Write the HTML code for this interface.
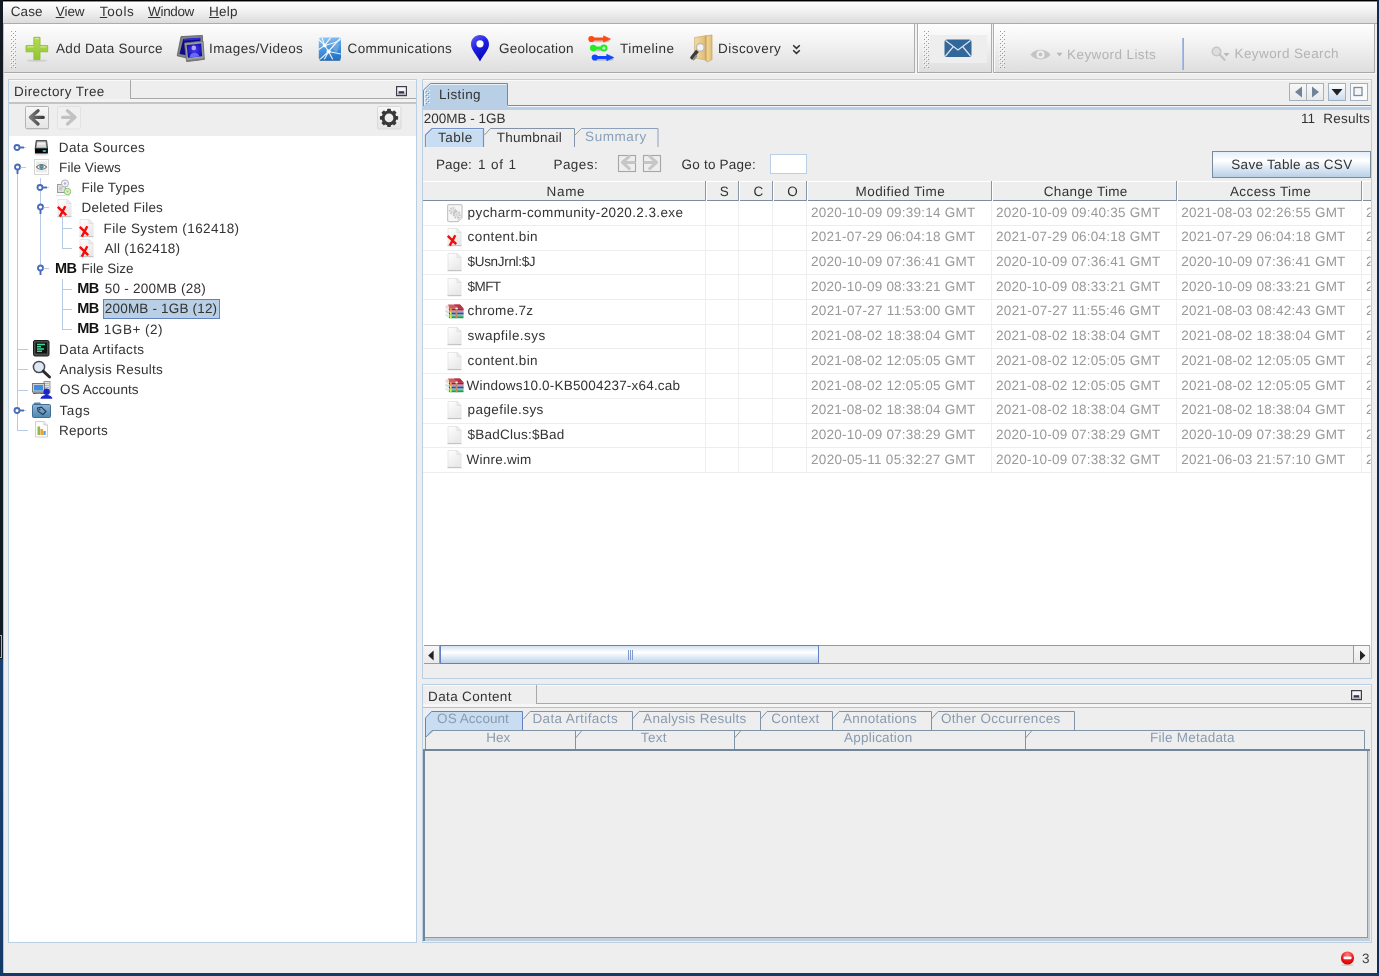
<!DOCTYPE html>
<html><head><meta charset="utf-8"><title>Autopsy</title>
<style>
html,body{margin:0;padding:0}
body{width:1379px;height:976px;overflow:hidden;position:relative;background:#eeeeee;font-family:"Liberation Sans",sans-serif;font-size:13.5px;line-height:16px;color:#333333}
body>div,body>svg,body>span{position:absolute}
svg{overflow:visible;display:block}
.t{white-space:pre;height:16px;position:absolute}
#tx{text-rendering:geometricPrecision;left:0;top:0;width:1379px;height:976px;will-change:transform}
u{text-decoration:underline;text-underline-offset:1px;text-decoration-thickness:1px}
</style></head><body>
<div style="left:0px;top:0px;width:1379px;height:1px;background:#000"></div>
<div style="left:0px;top:1px;width:1379px;height:1px;background:#8e8e8e"></div>
<div style="left:0px;top:0px;width:3px;height:659px;background:#141a24"></div>
<div style="left:0px;top:659px;width:3px;height:317px;background:linear-gradient(#17406f,#143a6a)"></div>
<div style="left:1px;top:635px;width:1px;height:23px;background:#aaa"></div>
<div style="left:0px;top:635px;width:2px;height:1px;background:#aaa"></div>
<div style="left:0px;top:657px;width:2px;height:1px;background:#aaa"></div>
<div style="left:3px;top:2px;width:1px;height:971px;background:rgba(0,0,0,.18)"></div>
<div style="left:1377px;top:0px;width:2px;height:976px;background:#0e2c55"></div>
<div style="left:0px;top:973px;width:1379px;height:3px;background:#143a6a"></div>
<div style="left:3px;top:2px;width:1374px;height:21px;background:linear-gradient(#ffffff,#f6f6f6 30%,#dcdcdc)"></div>
<div style="left:3px;top:23px;width:1374px;height:1px;background:#acacac"></div>
<div style="left:4px;top:24px;width:911px;height:48px;background:linear-gradient(#fefefe,#f4f4f4 35%,#dedede)"></div>
<div style="left:4px;top:72px;width:911px;height:1px;background:#a9a9a9"></div>
<div style="left:914px;top:23px;width:1px;height:50px;background:#adadad"></div>
<div style="left:917px;top:24px;width:75px;height:48px;background:linear-gradient(#fefefe,#f4f4f4 35%,#dedede)"></div>
<div style="left:917px;top:72px;width:75px;height:1px;background:#a9a9a9"></div>
<div style="left:917px;top:23px;width:1px;height:50px;background:#adadad"></div>
<div style="left:918px;top:24px;width:1px;height:48px;background:rgba(255,255,255,.8)"></div>
<div style="left:991px;top:23px;width:1px;height:50px;background:#adadad"></div>
<div style="left:993px;top:24px;width:382px;height:48px;background:linear-gradient(#fefefe,#f4f4f4 35%,#dedede)"></div>
<div style="left:993px;top:72px;width:382px;height:1px;background:#a9a9a9"></div>
<div style="left:993px;top:23px;width:1px;height:50px;background:#adadad"></div>
<div style="left:994px;top:24px;width:1px;height:48px;background:rgba(255,255,255,.8)"></div>
<div style="left:1374px;top:23px;width:1px;height:50px;background:#adadad"></div>
<div style="left:915px;top:24px;width:2px;height:49px;background:#f2f2f2"></div>
<div style="left:992px;top:24px;width:1px;height:49px;background:#f2f2f2"></div>
<div style="left:1375px;top:24px;width:2px;height:49px;background:#eee"></div>
<div style="left:4px;top:73px;width:1373px;height:1px;background:#f8f8f8"></div>
<svg style="left:10px;top:30px" width="6" height="38"><defs><pattern id="g1" width="4" height="4" patternUnits="userSpaceOnUse"><rect x="0" y="0" width="1" height="1" fill="#fff"/><rect x="1" y="1" width="1" height="1" fill="#9a9a9a"/><rect x="2" y="2" width="1" height="1" fill="#fff"/><rect x="3" y="3" width="1" height="1" fill="#9a9a9a"/></pattern></defs><rect width="6" height="38" fill="url(#g1)"/></svg>
<svg style="left:923px;top:30px" width="6" height="38"><defs><pattern id="g2" width="4" height="4" patternUnits="userSpaceOnUse"><rect x="0" y="0" width="1" height="1" fill="#fff"/><rect x="1" y="1" width="1" height="1" fill="#9a9a9a"/><rect x="2" y="2" width="1" height="1" fill="#fff"/><rect x="3" y="3" width="1" height="1" fill="#9a9a9a"/></pattern></defs><rect width="6" height="38" fill="url(#g2)"/></svg>
<svg style="left:999px;top:30px" width="6" height="38"><defs><pattern id="g3" width="4" height="4" patternUnits="userSpaceOnUse"><rect x="0" y="0" width="1" height="1" fill="#fff"/><rect x="1" y="1" width="1" height="1" fill="#9a9a9a"/><rect x="2" y="2" width="1" height="1" fill="#fff"/><rect x="3" y="3" width="1" height="1" fill="#9a9a9a"/></pattern></defs><rect width="6" height="38" fill="url(#g3)"/></svg>
<div style="left:930px;top:35px;width:57px;height:28px;background:#eeeeee"></div>
<div style="left:1182px;top:38px;width:2px;height:32px;background:linear-gradient(90deg,#b4c6e6,#8aa4d6)"></div>
<div style="left:8px;top:79px;width:409px;height:864px;background:#eeeeee;border:1px solid #b8cfe5;box-sizing:border-box"></div>
<div style="left:9px;top:80px;width:407px;height:1px;background:#fafafa"></div>
<div style="left:130px;top:80px;width:1px;height:19px;background:#a8a8a8"></div>
<div style="left:130px;top:98px;width:286px;height:1px;background:#a8a8a8"></div>
<div style="left:9px;top:99px;width:407px;height:3px;background:#f3f3f3"></div>
<div style="left:9px;top:102px;width:407px;height:2px;background:#c4c4c4"></div>
<div style="left:9px;top:136px;width:407px;height:806px;background:#fff"></div>
<div style="left:422px;top:79px;width:950px;height:600px;background:#eeeeee;border:1px solid #b8cfe5;box-sizing:border-box"></div>
<div style="left:423px;top:80px;width:948px;height:1px;background:#fafafa"></div>
<div style="left:508px;top:105px;width:863px;height:1px;background:#7a8a99"></div>
<div style="left:508px;top:106px;width:863px;height:1px;background:#f2f5f9"></div>
<div style="left:423px;top:107px;width:948px;height:3px;background:#b8cfe5"></div>
<svg style="left:422px;top:82px" width="88" height="28"><path d="M1.5,25 L1.5,8 L8.3,1.5 L85.5,1.5 L85.5,25 Z" fill="#b8cfe5"/><path d="M1.5,24 L1.5,8 L8.3,1.5 L85.5,1.5 L85.5,23.5" fill="none" stroke="#7a8a99" stroke-width="1"/><path d="M2.5,23 L2.5,8.6 L8.8,2.5 L84.5,2.5" fill="none" stroke="#e9f0f8" stroke-width="1"/><rect x="1" y="24" width="85" height="4" fill="#b8cfe5"/></svg>
<svg style="left:425px;top:90px" width="6" height="15"><defs><pattern id="g4" width="4" height="4" patternUnits="userSpaceOnUse"><rect x="0" y="0" width="1" height="1" fill="#fff"/><rect x="1" y="1" width="1" height="1" fill="#7d93ad"/><rect x="2" y="2" width="1" height="1" fill="#fff"/><rect x="3" y="3" width="1" height="1" fill="#7d93ad"/></pattern></defs><rect width="5" height="14" fill="url(#g4)"/></svg>
<div style="left:422px;top:684px;width:950px;height:259px;background:#eeeeee;border:1px solid #b8cfe5;box-sizing:border-box"></div>
<div style="left:423px;top:685px;width:948px;height:1px;background:#fafafa"></div>
<div style="left:536px;top:685px;width:1px;height:19px;background:#a8a8a8"></div>
<div style="left:536px;top:703px;width:835px;height:1px;background:#a8a8a8"></div>
<div style="left:423px;top:704px;width:948px;height:3px;background:#f6f6f6"></div>
<div style="left:423px;top:707px;width:948px;height:1px;background:#bdbdbd"></div>
<svg style="left:396px;top:86px" width="11" height="10"><rect x="0.6" y="0.6" width="9.8" height="9" fill="#f6f6f6" stroke="#3c3c4a" stroke-width="1.2"/><rect x="1.4" y="7" width="8.2" height="2" fill="#b8b8c0"/><rect x="2.6" y="5.2" width="5.6" height="2.2" fill="#33334a"/></svg>
<svg style="left:25px;top:106px" width="25" height="24"><defs><linearGradient id="bg1" x1="0" y1="0" x2="0" y2="1"><stop offset="0" stop-color="#f8f8f8"/><stop offset="1" stop-color="#e4e4e4"/></linearGradient><linearGradient id="ar1" x1="0" y1="0" x2="1" y2="0"><stop offset="0" stop-color="#7a7a7a"/><stop offset="1" stop-color="#3c3c3c"/></linearGradient></defs><rect x="1" y="1" width="23" height="22.5" rx="1" fill="#c9c9c9"/><rect x="0.5" y="0.5" width="23" height="22" rx="1" fill="url(#bg1)" stroke="#b4b4b4"/><path d="M13,4.7 L5.4,11.3 L13,17.9 M6.5,11.3 L18.3,11.3" stroke="url(#ar1)" stroke-width="3.3" fill="none" stroke-linecap="round" stroke-linejoin="round"/></svg>
<svg style="left:57px;top:106px" width="25" height="24"><rect x="0.5" y="0.5" width="23" height="22.5" rx="1.5" fill="#f0f0f0" stroke="#e2e2e2"/><path d="M10.5,4.7 L18,11.3 L10.5,17.9 M17,11.3 L5.6,11.3" stroke="#c2c2c2" stroke-width="3.3" fill="none" stroke-linecap="round" stroke-linejoin="round"/></svg>
<svg style="left:377px;top:106px" width="25" height="24"><rect x="0.5" y="0.5" width="23.5" height="22.5" rx="1.5" fill="url(#bg1)" stroke="#d9d9d9"/><g transform="translate(12,11.9)"><g fill="#383838"><rect x="-1.9" y="-9.1" width="3.8" height="4" rx="0.8" transform="rotate(0)"/><rect x="-1.9" y="-9.1" width="3.8" height="4" rx="0.8" transform="rotate(45)"/><rect x="-1.9" y="-9.1" width="3.8" height="4" rx="0.8" transform="rotate(90)"/><rect x="-1.9" y="-9.1" width="3.8" height="4" rx="0.8" transform="rotate(135)"/><rect x="-1.9" y="-9.1" width="3.8" height="4" rx="0.8" transform="rotate(180)"/><rect x="-1.9" y="-9.1" width="3.8" height="4" rx="0.8" transform="rotate(225)"/><rect x="-1.9" y="-9.1" width="3.8" height="4" rx="0.8" transform="rotate(270)"/><rect x="-1.9" y="-9.1" width="3.8" height="4" rx="0.8" transform="rotate(315)"/></g><circle r="5.9" fill="none" stroke="#383838" stroke-width="3"/></g></svg>
<div style="left:17px;top:168px;width:1px;height:263px;background:#b7cae5"></div>
<div style="left:40px;top:178px;width:1px;height:91px;background:#b7cae5"></div>
<div style="left:62px;top:216px;width:1px;height:33px;background:#b7cae5"></div>
<div style="left:62px;top:279px;width:1px;height:51px;background:#b7cae5"></div>
<div style="left:62px;top:228px;width:10px;height:1px;background:#b7cae5"></div>
<div style="left:62px;top:248px;width:10px;height:1px;background:#b7cae5"></div>
<div style="left:62px;top:289px;width:10px;height:1px;background:#b7cae5"></div>
<div style="left:62px;top:309px;width:10px;height:1px;background:#b7cae5"></div>
<div style="left:62px;top:329px;width:10px;height:1px;background:#b7cae5"></div>
<div style="left:17px;top:349px;width:11px;height:1px;background:#b7cae5"></div>
<div style="left:17px;top:369px;width:11px;height:1px;background:#b7cae5"></div>
<div style="left:17px;top:390px;width:11px;height:1px;background:#b7cae5"></div>
<div style="left:17px;top:430px;width:11px;height:1px;background:#b7cae5"></div>
<svg style="left:13px;top:143px" width="14" height="9"><circle cx="4" cy="4.5" r="2.5" fill="#fff" stroke="#4a6cb8" stroke-width="1.9"/><path d="M6.8,4.5 L11,4.5" stroke="#4a6cb8" stroke-width="1.9"/><path d="M11,4.5 L13,4.5" stroke="#b7cae5" stroke-width="1"/></svg>
<svg style="left:13px;top:163px" width="14" height="13"><circle cx="4.5" cy="4" r="2.5" fill="#fff" stroke="#4a6cb8" stroke-width="1.9"/><path d="M4.5,6.8 L4.5,11" stroke="#4a6cb8" stroke-width="1.9"/><path d="M7.5,4.5 L13,4.5" stroke="#b7cae5" stroke-width="1"/></svg>
<svg style="left:36px;top:183px" width="14" height="9"><circle cx="4" cy="4.5" r="2.5" fill="#fff" stroke="#4a6cb8" stroke-width="1.9"/><path d="M6.8,4.5 L11,4.5" stroke="#4a6cb8" stroke-width="1.9"/><path d="M11,4.5 L13,4.5" stroke="#b7cae5" stroke-width="1"/></svg>
<svg style="left:36px;top:203px" width="14" height="13"><circle cx="4.5" cy="4" r="2.5" fill="#fff" stroke="#4a6cb8" stroke-width="1.9"/><path d="M4.5,6.8 L4.5,11" stroke="#4a6cb8" stroke-width="1.9"/><path d="M7.5,4.5 L13,4.5" stroke="#b7cae5" stroke-width="1"/></svg>
<svg style="left:36px;top:264px" width="14" height="13"><circle cx="4.5" cy="4" r="2.5" fill="#fff" stroke="#4a6cb8" stroke-width="1.9"/><path d="M4.5,6.8 L4.5,11" stroke="#4a6cb8" stroke-width="1.9"/><path d="M7.5,4.5 L13,4.5" stroke="#b7cae5" stroke-width="1"/></svg>
<svg style="left:13px;top:406px" width="14" height="9"><circle cx="4" cy="4.5" r="2.5" fill="#fff" stroke="#4a6cb8" stroke-width="1.9"/><path d="M6.8,4.5 L11,4.5" stroke="#4a6cb8" stroke-width="1.9"/><path d="M11,4.5 L13,4.5" stroke="#b7cae5" stroke-width="1"/></svg>
<div style="left:103px;top:299px;width:117px;height:20px;background:#b8cfe5;border:1px solid #6382bf;box-sizing:border-box"></div>
<svg style="left:1289px;top:83px" width="80" height="19">
<defs><linearGradient id="nb" x1="0" y1="0" x2="0" y2="1"><stop offset="0" stop-color="#f8f8f8"/><stop offset="1" stop-color="#e9e9e9"/></linearGradient>
<linearGradient id="nb2" x1="0" y1="0" x2="0" y2="1"><stop offset="0" stop-color="#ffffff"/><stop offset="1" stop-color="#c9dcf0"/></linearGradient></defs>
<rect x="0.5" y="0.5" width="17" height="17" fill="url(#nb)" stroke="#a3b0be"/>
<rect x="17.5" y="0.5" width="17" height="17" fill="url(#nb)" stroke="#a3b0be"/>
<path d="M13,3.5 L13,14.5 L6,9 Z" fill="#6f8399"/><path d="M23,3.5 L23,14.5 L30,9 Z" fill="#6f8399"/>
<rect x="39.5" y="0.5" width="17" height="17" fill="url(#nb2)" stroke="#a3b0be"/>
<path d="M42.5,6 L53.5,6 L48,12.5 Z" fill="#222"/>
<rect x="61.5" y="0.5" width="17" height="17" fill="#fafafa" stroke="#a3b0be"/>
<rect x="65" y="4.5" width="8" height="8" fill="#f6f6f6" stroke="#7d8ea3" stroke-width="1.3"/>
</svg>
<svg style="left:424px;top:128px" width="236" height="21">
<path d="M1.5,19 L1.5,7 L8,0.5 L59.5,0.5 L59.5,19 Z" fill="#c8ddf2"/>
<path d="M2.6,19 L2.6,7.5 L8.5,1.6 L58.5,1.6" fill="none" stroke="#dceaf8" stroke-width="1"/>
<path d="M1.5,19 L1.5,7 L8,0.5 L59.5,0.5 L59.5,19" fill="none" stroke="#7391cb" stroke-width="1.2"/>
<path d="M60.5,7 L66.5,0.5 L150.5,0.5 L150.5,19" fill="none" stroke="#8494a6"/>
<path d="M151,7 L157.5,0.5 L234,0.5 L234,19" fill="none" stroke="#8da2ba"/>
</svg>
<svg style="left:618px;top:155px" width="44" height="18">
<rect x="0.5" y="0.5" width="17" height="16" fill="#eeeeee" stroke="#a6a6a6" stroke-width="1.1"/>
<rect x="25.5" y="0.5" width="17" height="16" fill="#eeeeee" stroke="#a6a6a6" stroke-width="1.1"/>
<path d="M11.3,1.4 L4.4,7.4 L11.3,13.6 M5.4,7.4 L16.4,7.4" stroke="#c6c6c6" stroke-width="3" fill="none" stroke-linecap="round" stroke-linejoin="round"/>
<path d="M31.7,1.4 L38.6,7.4 L31.7,13.6 M37.6,7.4 L26.8,7.4" stroke="#c6c6c6" stroke-width="3" fill="none" stroke-linecap="round" stroke-linejoin="round"/>
</svg>
<div style="left:770px;top:154px;width:37px;height:20px;background:#fff;border:1px solid #b8cfe5;box-sizing:border-box"></div>
<div style="left:1212px;top:151px;width:159px;height:27px;background:linear-gradient(#e4eef9,#ffffff 35%,#d7e5f3 70%,#b9d0e6);border:1px solid #7a8a99;box-sizing:border-box"></div>
<div style="left:423px;top:181px;width:948px;height:465px;background:#fff"></div>
<div style="left:423px;top:181px;width:948px;height:19px;background:#eeeeee"></div>
<div style="left:423px;top:181px;width:948px;height:1px;background:#ffffff"></div>
<div style="left:423px;top:200px;width:948px;height:1px;background:#7d8d9d"></div>
<div style="left:705px;top:181px;width:1px;height:20px;background:#8797a8"></div>
<div style="left:706px;top:181px;width:1px;height:20px;background:#ffffff"></div>
<div style="left:705px;top:201px;width:1px;height:271px;background:#efefef"></div>
<div style="left:738px;top:181px;width:1px;height:20px;background:#8797a8"></div>
<div style="left:739px;top:181px;width:1px;height:20px;background:#ffffff"></div>
<div style="left:738px;top:201px;width:1px;height:271px;background:#efefef"></div>
<div style="left:772px;top:181px;width:1px;height:20px;background:#8797a8"></div>
<div style="left:773px;top:181px;width:1px;height:20px;background:#ffffff"></div>
<div style="left:772px;top:201px;width:1px;height:271px;background:#efefef"></div>
<div style="left:806px;top:181px;width:1px;height:20px;background:#8797a8"></div>
<div style="left:807px;top:181px;width:1px;height:20px;background:#ffffff"></div>
<div style="left:806px;top:201px;width:1px;height:271px;background:#efefef"></div>
<div style="left:991px;top:181px;width:1px;height:20px;background:#8797a8"></div>
<div style="left:992px;top:181px;width:1px;height:20px;background:#ffffff"></div>
<div style="left:991px;top:201px;width:1px;height:271px;background:#efefef"></div>
<div style="left:1176px;top:181px;width:1px;height:20px;background:#8797a8"></div>
<div style="left:1177px;top:181px;width:1px;height:20px;background:#ffffff"></div>
<div style="left:1176px;top:201px;width:1px;height:271px;background:#efefef"></div>
<div style="left:1361px;top:181px;width:1px;height:20px;background:#8797a8"></div>
<div style="left:1362px;top:181px;width:1px;height:20px;background:#ffffff"></div>
<div style="left:1361px;top:201px;width:1px;height:271px;background:#efefef"></div>
<div style="left:423px;top:225px;width:948px;height:1px;background:#ededed"></div>
<div style="left:423px;top:250px;width:948px;height:1px;background:#ededed"></div>
<div style="left:423px;top:274px;width:948px;height:1px;background:#ededed"></div>
<div style="left:423px;top:299px;width:948px;height:1px;background:#ededed"></div>
<div style="left:423px;top:324px;width:948px;height:1px;background:#ededed"></div>
<div style="left:423px;top:348px;width:948px;height:1px;background:#ededed"></div>
<div style="left:423px;top:373px;width:948px;height:1px;background:#ededed"></div>
<div style="left:423px;top:398px;width:948px;height:1px;background:#ededed"></div>
<div style="left:423px;top:423px;width:948px;height:1px;background:#ededed"></div>
<div style="left:423px;top:447px;width:948px;height:1px;background:#ededed"></div>
<div style="left:423px;top:472px;width:948px;height:1px;background:#ededed"></div>
<svg style="left:447px;top:204px" width="16" height="19"><path d="M2,0.6 L13.6,0.6 Q15,0.6 15,2 L15,13.5 L11,17.6 L2,17.6 Q0.6,17.6 0.6,16.2 L0.6,2 Q0.6,0.6 2,0.6 Z" fill="#f6f6f6" stroke="#c6c6c6" stroke-width="1.2"/><path d="M15,13.5 L11.5,13.8 L11,17.6" fill="#e4e4e4" stroke="#cfcfcf" stroke-width=".8"/><circle cx="5.6" cy="6.8" r="2.7" fill="none" stroke="#c6c8ca" stroke-width="2.2" stroke-dasharray="1.6 0.9"/><circle cx="5.6" cy="6.8" r="1.5" fill="#dadcde"/><circle cx="9.8" cy="10.6" r="2.9" fill="none" stroke="#c2c4c6" stroke-width="2.2" stroke-dasharray="1.6 0.9"/><circle cx="9.8" cy="10.6" r="1.6" fill="#d6d8da"/></svg>
<svg style="left:447px;top:228px" width="15" height="19"><defs><linearGradient id="fg447228" x1="0" y1="0" x2="0.6" y2="1"><stop offset="0" stop-color="#ffffff"/><stop offset="1" stop-color="#e9e9e9"/></linearGradient></defs><path d="M1,0.5 L10,0.5 L14,4.5 L14,17 L1,17 Z" fill="url(#fg447228)" stroke="#e6e6e6"/><path d="M10,0.5 L10,4.5 L14,4.5 Z" fill="#f2f2f2" stroke="#e0e0e0"/><path d="M0.5,17.6 L14.5,17.6" stroke="#c4c4c4" stroke-width="1.2"/><path d="M0.8,7.8 L9.2,16.2 M8.3,7.2 L2.8,17.6" stroke="#f60a0a" stroke-width="2.4" fill="none"/></svg>
<svg style="left:447px;top:253px" width="15" height="19"><defs><linearGradient id="fg447253" x1="0" y1="0" x2="0.6" y2="1"><stop offset="0" stop-color="#ffffff"/><stop offset="1" stop-color="#e9e9e9"/></linearGradient></defs><path d="M1,0.5 L10,0.5 L14,4.5 L14,17 L1,17 Z" fill="url(#fg447253)" stroke="#e6e6e6"/><path d="M10,0.5 L10,4.5 L14,4.5 Z" fill="#f2f2f2" stroke="#e0e0e0"/><path d="M0.5,17.6 L14.5,17.6" stroke="#c4c4c4" stroke-width="1.2"/></svg>
<svg style="left:447px;top:278px" width="15" height="19"><defs><linearGradient id="fg447278" x1="0" y1="0" x2="0.6" y2="1"><stop offset="0" stop-color="#ffffff"/><stop offset="1" stop-color="#e9e9e9"/></linearGradient></defs><path d="M1,0.5 L10,0.5 L14,4.5 L14,17 L1,17 Z" fill="url(#fg447278)" stroke="#e6e6e6"/><path d="M10,0.5 L10,4.5 L14,4.5 Z" fill="#f2f2f2" stroke="#e0e0e0"/><path d="M0.5,17.6 L14.5,17.6" stroke="#c4c4c4" stroke-width="1.2"/></svg>
<svg style="left:445px;top:304px" width="19" height="15"><path d="M3,0.4 L15,0.4 L18.6,4.5 L4,4.5 Z" fill="#cf5a68"/><path d="M9,0.4 L15,0.4 L18.6,4.5 L12,4.5 Z" fill="#b63346"/><rect x="4" y="4.5" width="14.6" height="2.1" fill="#a51c30"/><path d="M0.4,2 L3,0.4 L4,4.5 L4,6.6 L0.4,4 Z" fill="#efd8dc"/><rect x="4" y="6.9" width="14.6" height="1.6" fill="#93a8da"/><rect x="4" y="8.5" width="14.6" height="2.1" fill="#2c4c9c"/><path d="M0.4,5.4 L4,6.9 L4,10.6 L0.4,8 Z" fill="#d6deee"/><rect x="4" y="10.8" width="14.6" height="1.5" fill="#78cc94"/><rect x="4" y="12.3" width="14.6" height="1.9" rx=".6" fill="#18a050"/><path d="M0.4,9.4 L4,10.9 L4,14.2 L0.4,11.6 Z" fill="#d6eeda"/><rect x="5" y="4.2" width="1.6" height="2.4" fill="#f2b020"/><rect x="5" y="7.6" width="1.6" height="3" fill="#f0e040"/><rect x="5" y="11.2" width="1.6" height="3" fill="#e6ea44"/><rect x="10.6" y="2.6" width="1.9" height="11.6" fill="#c48a64"/><rect x="10.4" y="3.8" width="2.3" height="1.3" fill="#f4ece6"/></svg>
<svg style="left:447px;top:327px" width="15" height="19"><defs><linearGradient id="fg447327" x1="0" y1="0" x2="0.6" y2="1"><stop offset="0" stop-color="#ffffff"/><stop offset="1" stop-color="#e9e9e9"/></linearGradient></defs><path d="M1,0.5 L10,0.5 L14,4.5 L14,17 L1,17 Z" fill="url(#fg447327)" stroke="#e6e6e6"/><path d="M10,0.5 L10,4.5 L14,4.5 Z" fill="#f2f2f2" stroke="#e0e0e0"/><path d="M0.5,17.6 L14.5,17.6" stroke="#c4c4c4" stroke-width="1.2"/></svg>
<svg style="left:447px;top:352px" width="15" height="19"><defs><linearGradient id="fg447352" x1="0" y1="0" x2="0.6" y2="1"><stop offset="0" stop-color="#ffffff"/><stop offset="1" stop-color="#e9e9e9"/></linearGradient></defs><path d="M1,0.5 L10,0.5 L14,4.5 L14,17 L1,17 Z" fill="url(#fg447352)" stroke="#e6e6e6"/><path d="M10,0.5 L10,4.5 L14,4.5 Z" fill="#f2f2f2" stroke="#e0e0e0"/><path d="M0.5,17.6 L14.5,17.6" stroke="#c4c4c4" stroke-width="1.2"/></svg>
<svg style="left:445px;top:378px" width="19" height="15"><path d="M3,0.4 L15,0.4 L18.6,4.5 L4,4.5 Z" fill="#cf5a68"/><path d="M9,0.4 L15,0.4 L18.6,4.5 L12,4.5 Z" fill="#b63346"/><rect x="4" y="4.5" width="14.6" height="2.1" fill="#a51c30"/><path d="M0.4,2 L3,0.4 L4,4.5 L4,6.6 L0.4,4 Z" fill="#efd8dc"/><rect x="4" y="6.9" width="14.6" height="1.6" fill="#93a8da"/><rect x="4" y="8.5" width="14.6" height="2.1" fill="#2c4c9c"/><path d="M0.4,5.4 L4,6.9 L4,10.6 L0.4,8 Z" fill="#d6deee"/><rect x="4" y="10.8" width="14.6" height="1.5" fill="#78cc94"/><rect x="4" y="12.3" width="14.6" height="1.9" rx=".6" fill="#18a050"/><path d="M0.4,9.4 L4,10.9 L4,14.2 L0.4,11.6 Z" fill="#d6eeda"/><rect x="5" y="4.2" width="1.6" height="2.4" fill="#f2b020"/><rect x="5" y="7.6" width="1.6" height="3" fill="#f0e040"/><rect x="5" y="11.2" width="1.6" height="3" fill="#e6ea44"/><rect x="10.6" y="2.6" width="1.9" height="11.6" fill="#c48a64"/><rect x="10.4" y="3.8" width="2.3" height="1.3" fill="#f4ece6"/></svg>
<svg style="left:447px;top:401px" width="15" height="19"><defs><linearGradient id="fg447401" x1="0" y1="0" x2="0.6" y2="1"><stop offset="0" stop-color="#ffffff"/><stop offset="1" stop-color="#e9e9e9"/></linearGradient></defs><path d="M1,0.5 L10,0.5 L14,4.5 L14,17 L1,17 Z" fill="url(#fg447401)" stroke="#e6e6e6"/><path d="M10,0.5 L10,4.5 L14,4.5 Z" fill="#f2f2f2" stroke="#e0e0e0"/><path d="M0.5,17.6 L14.5,17.6" stroke="#c4c4c4" stroke-width="1.2"/></svg>
<svg style="left:447px;top:426px" width="15" height="19"><defs><linearGradient id="fg447426" x1="0" y1="0" x2="0.6" y2="1"><stop offset="0" stop-color="#ffffff"/><stop offset="1" stop-color="#e9e9e9"/></linearGradient></defs><path d="M1,0.5 L10,0.5 L14,4.5 L14,17 L1,17 Z" fill="url(#fg447426)" stroke="#e6e6e6"/><path d="M10,0.5 L10,4.5 L14,4.5 Z" fill="#f2f2f2" stroke="#e0e0e0"/><path d="M0.5,17.6 L14.5,17.6" stroke="#c4c4c4" stroke-width="1.2"/></svg>
<svg style="left:447px;top:450px" width="15" height="19"><defs><linearGradient id="fg447450" x1="0" y1="0" x2="0.6" y2="1"><stop offset="0" stop-color="#ffffff"/><stop offset="1" stop-color="#e9e9e9"/></linearGradient></defs><path d="M1,0.5 L10,0.5 L14,4.5 L14,17 L1,17 Z" fill="url(#fg447450)" stroke="#e6e6e6"/><path d="M10,0.5 L10,4.5 L14,4.5 Z" fill="#f2f2f2" stroke="#e0e0e0"/><path d="M0.5,17.6 L14.5,17.6" stroke="#c4c4c4" stroke-width="1.2"/></svg>
<div style="left:424px;top:645px;width:946px;height:1px;background:#8e9cab"></div>
<div style="left:424px;top:646px;width:946px;height:17px;background:#eeeeee"></div>
<div style="left:424px;top:663px;width:946px;height:1px;background:#8e9cab"></div>
<div style="left:424px;top:646px;width:16px;height:17px;background:linear-gradient(#f7f7f7,#eaeaea);border-right:1px solid #8e9cab;box-sizing:border-box"></div>
<svg style="left:428px;top:650px" width="8" height="12"><path d="M5.6,0.5 L5.6,10.5 L0.2,5.5 Z" fill="#222"/></svg>
<div style="left:1353px;top:646px;width:17px;height:17px;background:linear-gradient(#f7f7f7,#eaeaea);border-left:1px solid #8e9cab;border-right:1px solid #a9b4c0;box-sizing:border-box"></div>
<svg style="left:1359px;top:650px" width="8" height="12"><path d="M1,0.5 L1,10.5 L6.4,5.5 Z" fill="#222"/></svg>
<div style="left:440px;top:645px;width:379px;height:19px;background:linear-gradient(#d3e2f3,#ffffff 38%,#dbe7f4 70%,#bdd2e8);border:1px solid #6382bf;box-sizing:border-box"></div>
<div style="left:628px;top:650px;width:1px;height:10px;background:#7f9bd0"></div>
<div style="left:630px;top:650px;width:1px;height:10px;background:#7f9bd0"></div>
<div style="left:632px;top:650px;width:1px;height:10px;background:#7f9bd0"></div>
<svg style="left:1351px;top:690px" width="11" height="10"><rect x="0.6" y="0.6" width="9.8" height="9" fill="#f6f6f6" stroke="#3c3c4a" stroke-width="1.2"/><rect x="1.4" y="7" width="8.2" height="2" fill="#b8b8c0"/><rect x="2.6" y="5.2" width="5.6" height="2.2" fill="#33334a"/></svg>
<svg style="left:0px;top:711px" width="1379" height="42"><path d="M425.5,26 L425.5,7 L431.5,0.5 L522.5,0.5 L522.5,19.5 L433,19.5 L426,26 Z" fill="#c8ddf2" stroke="#6382bf"/><path d="M523.5,8 L530,0.5 L632.5,0.5 L632.5,19.5 L523.5,19.5" fill="none" stroke="#8193a7"/><path d="M632.5,8 L639,0.5 L760.5,0.5 L760.5,19.5 L632.5,19.5" fill="none" stroke="#8193a7"/><path d="M760.5,8 L767,0.5 L832.5,0.5 L832.5,19.5 L760.5,19.5" fill="none" stroke="#8193a7"/><path d="M832.5,8 L839,0.5 L931.5,0.5 L931.5,19.5 L832.5,19.5" fill="none" stroke="#8193a7"/><path d="M931.5,8 L938,0.5 L1074.5,0.5 L1074.5,19.5 L931.5,19.5" fill="none" stroke="#8193a7"/><path d="M425.5,38 L425.5,26.5 L432,19.5 L575.5,19.5 L575.5,38" fill="none" stroke="#8193a7"/><path d="M575.5,27 L582,19.5 L734.5,19.5 L734.5,38" fill="none" stroke="#8193a7"/><path d="M734.5,27 L741,19.5 L1025.5,19.5 L1025.5,38" fill="none" stroke="#8193a7"/><path d="M1025.5,27 L1032,19.5 L1364.5,19.5 L1364.5,38" fill="none" stroke="#8193a7"/></svg>
<div style="left:423px;top:749px;width:947px;height:2px;background:#72869b"></div>
<div style="left:423px;top:749px;width:2px;height:192px;background:#72869b"></div>
<div style="left:1367px;top:751px;width:1px;height:187px;background:#8c9aa8"></div>
<div style="left:1368px;top:751px;width:2px;height:190px;background:#c6ced8"></div>
<div style="left:425px;top:937px;width:943px;height:1px;background:#8c9aa8"></div>
<div style="left:425px;top:938px;width:945px;height:3px;background:#c6ced8"></div>
<svg style="left:1340px;top:951px" width="15" height="15"><defs><radialGradient id="rd" cx="0.5" cy="0.25" r="0.8"><stop offset="0" stop-color="#ff8a8a"/><stop offset="0.55" stop-color="#f01818"/><stop offset="1" stop-color="#c80000"/></radialGradient></defs><ellipse cx="7.5" cy="14" rx="6" ry="1" fill="rgba(0,0,0,.12)"/><circle cx="7.5" cy="7" r="6.6" fill="url(#rd)"/><rect x="3.5" y="5.6" width="8" height="2.6" rx="0.8" fill="#fff"/></svg>
<svg style="left:25px;top:36px" width="24" height="27"><defs><linearGradient id="gp" x1="0" y1="0" x2="0" y2="1"><stop offset="0" stop-color="#b4da58"/><stop offset="1" stop-color="#93c531"/></linearGradient></defs>
<ellipse cx="12" cy="24.6" rx="10.5" ry="1.1" fill="rgba(0,0,0,.10)"/>
<path d="M8.9,1.3 L15,1.3 L15,9.6 L22.7,9.6 L22.7,15.8 L15,15.8 L15,23.6 L8.9,23.6 L8.9,15.8 L1,15.8 L1,9.6 L8.9,9.6 Z" fill="url(#gp)" stroke="#90c030" stroke-width=".9" stroke-linejoin="round"/>
<path d="M9.9,2.6 L14,2.6 M2.3,10.9 L8.6,10.9 M15.3,10.9 L21.4,10.9" stroke="#cfe98c" stroke-width="1.1"/></svg>
<svg style="left:176px;top:35px" width="30" height="28"><defs><linearGradient id="ph" x1="0" y1="0" x2="0" y2="1"><stop offset="0" stop-color="#2626e0"/><stop offset="1" stop-color="#0a0a96"/></linearGradient><radialGradient id="ph2" cx="0.5" cy="0.45" r="0.6"><stop offset="0" stop-color="#4a3af0"/><stop offset="1" stop-color="#0c0ca8"/></radialGradient></defs>
<path d="M5,1.6 L26.4,0.4 L27,17 L10,22.8 L1.2,20.8 Z" fill="#848484" stroke="#5a5a5a" stroke-width=".8"/>
<path d="M7.2,4 L24.4,2.8 L24.6,15 L9,20 L3.6,19 Z" fill="#0c0c84"/>
<path d="M7.6,4.8 L24.2,3.6" stroke="#2a2af0" stroke-width="1.8"/>
<path d="M8.5,8 L27,6 L28.4,24.4 L10.6,26.6 Z" fill="#9c9c9c" stroke="#666" stroke-width=".8"/>
<path d="M10.6,10 L25.2,8.4 L26.2,21.2 L12,22.8 Z" fill="url(#ph2)"/>
<circle cx="17.8" cy="12.9" r="2.3" fill="#b0a4ff"/><path d="M13.6,22.6 C13.4,16.6 22.6,15.8 23.4,21.6 Z" fill="#6a6af0"/>
<path d="M11,25.9 L28,23.8" stroke="#777" stroke-width="1.2"/></svg>
<svg style="left:318px;top:37px" width="24" height="25"><defs><linearGradient id="cm" x1="0" y1="0" x2="0.25" y2="1"><stop offset="0" stop-color="#9ccdf4"/><stop offset="0.5" stop-color="#4f9be0"/><stop offset="1" stop-color="#2a76c6"/></linearGradient></defs>
<rect x="0.8" y="0.6" width="22.2" height="22.4" rx="2.2" fill="url(#cm)"/>
<path d="M13,6 C16,4 20,5 21.5,8 C20,10 21,13 19,15 C17,16 15.5,13.5 14.5,11 Z" fill="#7fb6ea" opacity=".55"/>
<g stroke="#ffffff" fill="none" opacity=".9"><path d="M6.7,8.4 L0.8,2.5 M6.7,8.4 L4,0.8 M6.7,8.4 L12.5,0.8 M6.7,8.4 L0.8,12.5 M6.7,8.4 L10.6,14.5" stroke-width="1.1"/><path d="M6.7,8.4 C13,7 19,5 22.8,2.5" stroke-width="1"/><path d="M10.6,14.5 L1.5,22.8 M10.6,14.5 L6,23 M10.6,14.5 L15,23 M10.6,14.5 L22.8,17" stroke-width="1.1"/><path d="M10.6,14.5 C14,10 18,6 22,1.5" stroke-width="1.2"/></g>
<circle cx="6.7" cy="8.4" r="1.9" fill="#fff"/><circle cx="10.6" cy="14.5" r="2.1" fill="#fff"/>
<rect x="1.5" y="22.4" width="21" height="1.4" rx=".7" fill="#245fa4"/></svg>
<svg style="left:470px;top:34px" width="20" height="29"><defs><linearGradient id="pin" x1="0.1" y1="0" x2="0.6" y2="1"><stop offset="0" stop-color="#6060f4"/><stop offset="0.45" stop-color="#2020e6"/><stop offset="1" stop-color="#0404b4"/></linearGradient></defs>
<path d="M10,27.5 C7,21 1,16 1,10.2 C1,5 5,1 10,1 C15,1 19,5 19,10.2 C19,16 13,21 10,27.5 Z" fill="url(#pin)"/><circle cx="10" cy="9.8" r="3.6" fill="#fff"/></svg>
<svg style="left:587px;top:34px" width="28" height="30">
<g opacity=".18" transform="translate(.6,1.2)"><path d="M4,5 L20,5 M6,14 L18,14 M8,23.5 L24,23.5" stroke="#000" stroke-width="4" stroke-linecap="round"/></g>
<path d="M4,5 L18,5" stroke="#ff4a14" stroke-width="2.9" stroke-linecap="round"/><circle cx="4.4" cy="5" r="3.1" fill="#ff4a14"/><path d="M16.6,1.9 L23.4,5 L16.6,8.1 Z" fill="#ff4a14" stroke="#ff4a14" stroke-width=".8" stroke-linejoin="round"/>
<path d="M6,14 L15,14" stroke="#1fee1f" stroke-width="2.9" stroke-linecap="round"/><circle cx="6.2" cy="14" r="3.2" fill="#1fee1f"/><circle cx="16.9" cy="14" r="2.5" fill="#d8f0d8" stroke="#1fee1f" stroke-width="1.9"/>
<path d="M8,23.5 L21,23.5" stroke="#1048ff" stroke-width="2.9" stroke-linecap="round"/><circle cx="7.8" cy="23.5" r="3.1" fill="#1048ff"/><path d="M19.8,20.4 L26.6,23.5 L19.8,26.6 Z" fill="#1048ff" stroke="#1048ff" stroke-width=".8" stroke-linejoin="round"/></svg>
<svg style="left:689px;top:34px" width="25" height="30"><defs><linearGradient id="fd" x1="0" y1="0" x2="1" y2="0"><stop offset="0" stop-color="#f3deaa"/><stop offset="1" stop-color="#dcb870"/></linearGradient><linearGradient id="fd2" x1="0" y1="0" x2="1" y2="0"><stop offset="0" stop-color="#c9a258"/><stop offset="0.35" stop-color="#f0d596"/><stop offset="1" stop-color="#deba72"/></linearGradient></defs>
<path d="M5.6,3.6 L17.5,1.6 L17.5,26 L5.6,24 Z" fill="url(#fd)" stroke="#cfae68" stroke-width=".7"/>
<path d="M16.4,2 L23,1 L23,25.6 L18.2,28 L16.4,26.2 Z" fill="url(#fd2)" stroke="#c8a45c" stroke-width=".7"/>
<path d="M8.8,16.4 L3,23.6" stroke="#3c3c3c" stroke-width="3.6" stroke-linecap="round"/><path d="M4.6,25.4 L7.2,22" stroke="#8c8c8c" stroke-width="2.2" stroke-linecap="round"/>
<circle cx="11.3" cy="13.4" r="3.9" fill="#f2f2f0" stroke="#bdbdb8" stroke-width="1.5"/></svg>
<svg style="left:792px;top:44px" width="9" height="11"><path d="M1.2,1.2 L4.5,4.4 L7.8,1.2 M1.2,6.2 L4.5,9.4 L7.8,6.2" fill="none" stroke="#333" stroke-width="1.5"/></svg>
<svg style="left:944px;top:39px" width="28" height="19"><rect x="0.5" y="0.5" width="27" height="17.5" rx="2.5" fill="#336699"/><path d="M1.5,1.5 L14,11 L26.5,1.5 M1.5,17 L9,8 M26.5,17 L19,8" stroke="#dbe6f1" stroke-width="1.2" fill="none"/></svg>
<svg style="left:1030px;top:48px" width="34" height="13"><path d="M0.5,6.5 C5,0 16,0 20.5,6.5 C16,13 5,13 0.5,6.5 Z" fill="#c4c4c4"/><circle cx="10.5" cy="6.5" r="4" fill="#efefef"/><circle cx="10.5" cy="6.5" r="2" fill="#c4c4c4"/><path d="M26.5,4.8 L32.5,4.8 L29.5,8.6 Z" fill="#b8b8b8"/></svg>
<svg style="left:1211px;top:46px" width="20" height="16"><circle cx="5.5" cy="5.5" r="4.2" fill="#dedede" stroke="#c6c6c6" stroke-width="1.6"/><path d="M8.8,8.8 L13.5,13.8" stroke="#c4c4c4" stroke-width="2.4" stroke-linecap="round"/><path d="M12.5,7 L18.5,7 L15.5,10.4 Z" fill="#b8b8b8"/></svg>
<svg style="left:34px;top:140px" width="15" height="16"><ellipse cx="7.5" cy="14.6" rx="7.5" ry="1" fill="rgba(0,0,0,.12)"/><path d="M2.2,0.6 L12.6,0.6 L13.6,9 L1.2,9 Z" fill="#8a8a8a" stroke="#3a3a3a" stroke-width=".9"/><path d="M3.2,1.8 L11.6,1.8 L12.2,7.6 L2.6,7.6 Z" fill="#d9d9d9"/><rect x="3.6" y="3" width="7.6" height="1.6" fill="#f4f4f4"/><rect x="0.9" y="8.6" width="13" height="5" rx=".6" fill="#050505"/><ellipse cx="10.4" cy="11" rx="1.9" ry="1.1" fill="#30c8c8"/></svg>
<svg style="left:34px;top:159px" width="16" height="17"><rect x="0.5" y="0.5" width="14" height="15" fill="#ffffff" stroke="#d6d6d6"/><rect x="2" y="2.5" width="11" height="11" fill="#ebebeb"/><path d="M2.4,8 C5,4.6 10,4.6 12.6,8 C10,11.4 5,11.4 2.4,8 Z" fill="#f4f4f4" stroke="#6a6a6a" stroke-width="1.1"/><circle cx="7.5" cy="7.8" r="2.2" fill="#5a7a84"/><circle cx="7.5" cy="7.5" r="1.1" fill="#30b8d8"/></svg>
<svg style="left:56px;top:179px" width="17" height="18"><rect x="1.5" y="5.5" width="8" height="8" fill="#e4e4e4" stroke="#9a9a9a"/><circle cx="9" cy="4.5" r="3.6" fill="#eef3f7" stroke="#a8b4bf"/><circle cx="9" cy="4.5" r="1.2" fill="#c6a6d6"/><rect x="3" y="7.5" width="3.4" height="4" fill="#c9c9c9"/><circle cx="11.5" cy="12.5" r="3.2" fill="#dff0d0" stroke="#8fbf6a"/><circle cx="11.5" cy="12.5" r="1.1" fill="#9fd070"/><path d="M0,16.5 L14,16.5" stroke="#e2e2e2"/></svg>
<svg style="left:57px;top:199px" width="15" height="19"><defs><linearGradient id="tf57199" x1="0" y1="0" x2="0.6" y2="1"><stop offset="0" stop-color="#ffffff"/><stop offset="1" stop-color="#e9e9e9"/></linearGradient></defs><path d="M1,0.5 L10,0.5 L14,4.5 L14,17 L1,17 Z" fill="url(#tf57199)" stroke="#e6e6e6"/><path d="M10,0.5 L10,4.5 L14,4.5 Z" fill="#f2f2f2" stroke="#e0e0e0"/><path d="M0.5,17.6 L14.5,17.6" stroke="#c4c4c4" stroke-width="1.2"/><path d="M0.8,7.8 L9.2,16.2 M8.3,7.2 L2.8,17.6" stroke="#f60a0a" stroke-width="2.4" fill="none"/></svg>
<svg style="left:79px;top:219px" width="15" height="19"><defs><linearGradient id="tf79219" x1="0" y1="0" x2="0.6" y2="1"><stop offset="0" stop-color="#ffffff"/><stop offset="1" stop-color="#e9e9e9"/></linearGradient></defs><path d="M1,0.5 L10,0.5 L14,4.5 L14,17 L1,17 Z" fill="url(#tf79219)" stroke="#e6e6e6"/><path d="M10,0.5 L10,4.5 L14,4.5 Z" fill="#f2f2f2" stroke="#e0e0e0"/><path d="M0.5,17.6 L14.5,17.6" stroke="#c4c4c4" stroke-width="1.2"/><path d="M0.8,7.8 L9.2,16.2 M8.3,7.2 L2.8,17.6" stroke="#f60a0a" stroke-width="2.4" fill="none"/></svg>
<svg style="left:79px;top:239px" width="15" height="19"><defs><linearGradient id="tf79239" x1="0" y1="0" x2="0.6" y2="1"><stop offset="0" stop-color="#ffffff"/><stop offset="1" stop-color="#e9e9e9"/></linearGradient></defs><path d="M1,0.5 L10,0.5 L14,4.5 L14,17 L1,17 Z" fill="url(#tf79239)" stroke="#e6e6e6"/><path d="M10,0.5 L10,4.5 L14,4.5 Z" fill="#f2f2f2" stroke="#e0e0e0"/><path d="M0.5,17.6 L14.5,17.6" stroke="#c4c4c4" stroke-width="1.2"/><path d="M0.8,7.8 L9.2,16.2 M8.3,7.2 L2.8,17.6" stroke="#f60a0a" stroke-width="2.4" fill="none"/></svg>
<svg style="left:33px;top:340px" width="17" height="17"><rect x="0.5" y="0.5" width="15.5" height="15.5" rx="1.5" fill="#4a4a4a" stroke="#1c1c1c"/><rect x="2.5" y="2.5" width="11.5" height="11" fill="#0c1410"/><path d="M4,4.5 L12,4.5 M4,6.8 L8,6.8 M4,9 L11,9 M4,11.2 L9,11.2" stroke="#3fd69a" stroke-width="1.4"/></svg>
<svg style="left:32px;top:360px" width="20" height="19"><circle cx="7" cy="7" r="5.6" fill="#dbe8f6" stroke="#4a4a4a" stroke-width="1.5"/><path d="M11.2,11.2 L17.5,17" stroke="#2c2c2c" stroke-width="3" stroke-linecap="round"/></svg>
<svg style="left:32px;top:381px" width="20" height="19"><rect x="12" y="0.5" width="6" height="11" fill="#e4e4e4" stroke="#999"/><path d="M13,2.5 L17,2.5 M13,4.5 L17,4.5 M13,6.5 L17,6.5" stroke="#aaa" stroke-width=".8"/><rect x="0.5" y="2.5" width="12" height="8.5" fill="#d0d0d0" stroke="#777"/><rect x="2" y="4" width="9" height="5.5" fill="#3a8ee0"/><rect x="1" y="11.5" width="12" height="1.5" fill="#666"/><rect x="4.5" y="11.4" width="4" height="1.6" fill="#888"/><circle cx="14.6" cy="10.8" r="3.2" fill="#1a28c8"/><path d="M8.4,17.8 C9,12.6 20,12.6 20.4,17.8 Z" fill="#1a28c8"/></svg>
<svg style="left:32px;top:402px" width="20" height="17"><defs><linearGradient id="tg" x1="0" y1="0" x2="0" y2="1"><stop offset="0" stop-color="#8fb4d2"/><stop offset="1" stop-color="#4f86b0"/></linearGradient></defs><path d="M1,2.5 L2.5,0.5 L8,0.5 L9.5,2.5 Z" fill="#5b86a8"/><rect x="0.5" y="2.5" width="18" height="13" rx="1" fill="url(#tg)" stroke="#3f6f96"/><path d="M5.5,6 L9.5,5.2 L14,9.5 L11,12.5 L6.2,9.5 Z" fill="none" stroke="#1f3f5c" stroke-width="1.1"/><circle cx="7.6" cy="7.4" r=".9" fill="#1f3f5c"/></svg>
<svg style="left:35px;top:421px" width="14" height="17"><path d="M0.5,0.5 L9,0.5 L12.5,4 L12.5,16 L0.5,16 Z" fill="#fdfdfd" stroke="#cfcfcf"/><path d="M9,0.5 L9,4 L12.5,4" fill="#eee" stroke="#cfcfcf"/><rect x="2.5" y="5.5" width="2.6" height="8.5" fill="#8dbb4a"/><rect x="5.4" y="8" width="2.6" height="6" fill="#f0a030"/><rect x="8.3" y="10" width="2.4" height="4" fill="#4aa8e0"/></svg>
<div id="tx">
<span class="t" style="left:10.70px;top:4.00px;letter-spacing:0.131px;color:#333;">Case</span>
<span class="t" style="left:55.70px;top:4.00px;letter-spacing:-0.039px;color:#333;"><u>V</u>iew</span>
<span class="t" style="left:99.85px;top:4.00px;letter-spacing:0.621px;color:#333;"><u>T</u>ools</span>
<span class="t" style="left:148.10px;top:4.00px;letter-spacing:-0.353px;color:#333;"><u>W</u>indow</span>
<span class="t" style="left:209.10px;top:4.00px;letter-spacing:0.248px;color:#333;"><u>H</u>elp</span>
<span class="t" style="left:56.10px;top:41.00px;letter-spacing:0.264px;color:#333;">Add Data Source</span>
<span class="t" style="left:209.10px;top:41.00px;letter-spacing:0.391px;color:#333;">Images/Videos</span>
<span class="t" style="left:347.60px;top:41.00px;letter-spacing:0.286px;color:#333;">Communications</span>
<span class="t" style="left:499.10px;top:41.00px;letter-spacing:0.246px;color:#333;">Geolocation</span>
<span class="t" style="left:620.10px;top:41.00px;letter-spacing:0.499px;color:#333;">Timeline</span>
<span class="t" style="left:718.10px;top:41.00px;letter-spacing:0.436px;color:#333;">Discovery</span>
<span class="t" style="left:1067.10px;top:47.00px;letter-spacing:0.393px;color:#b4b4b4;">Keyword Lists</span>
<span class="t" style="left:1234.60px;top:46.00px;letter-spacing:0.382px;color:#b4b4b4;">Keyword Search</span>
<span class="t" style="left:14.10px;top:84.00px;letter-spacing:0.423px;color:#333;">Directory Tree</span>
<span class="t" style="left:58.85px;top:140.00px;letter-spacing:0.383px;color:#333;">Data Sources</span>
<span class="t" style="left:59.10px;top:160.00px;letter-spacing:0.053px;color:#333;">File Views</span>
<span class="t" style="left:81.60px;top:180.00px;letter-spacing:0.192px;color:#333;">File Types</span>
<span class="t" style="left:81.60px;top:200.00px;letter-spacing:0.205px;color:#333;">Deleted Files</span>
<span class="t" style="left:103.50px;top:221.00px;letter-spacing:0.384px;color:#333;">File System (162418)</span>
<span class="t" style="left:104.50px;top:241.00px;letter-spacing:0.255px;color:#333;">All (162418)</span>
<span class="t" style="left:81.60px;top:261.00px;letter-spacing:0.030px;color:#333;">File Size</span>
<span class="t" style="left:104.85px;top:281.00px;letter-spacing:0.243px;color:#333;">50 - 200MB (28)</span>
<span class="t" style="left:104.85px;top:301.00px;letter-spacing:0.180px;color:#333;">200MB - 1GB (12)</span>
<span class="t" style="left:103.85px;top:322.00px;letter-spacing:0.514px;color:#333;">1GB+ (2)</span>
<span class="t" style="left:59.10px;top:342.00px;letter-spacing:0.363px;color:#333;">Data Artifacts</span>
<span class="t" style="left:59.50px;top:362.00px;letter-spacing:0.288px;color:#333;">Analysis Results</span>
<span class="t" style="left:60.10px;top:382.00px;letter-spacing:0.036px;color:#333;">OS Accounts</span>
<span class="t" style="left:59.50px;top:403.00px;letter-spacing:0.611px;color:#333;">Tags</span>
<span class="t" style="left:59.10px;top:423.00px;letter-spacing:0.247px;color:#333;">Reports</span>
<span class="t" style="left:55.10px;top:261.00px;letter-spacing:-0.600px;color:#111;font-weight:bold;font-size:14.5px;">MB</span>
<span class="t" style="left:77.20px;top:281.00px;letter-spacing:-0.600px;color:#111;font-weight:bold;font-size:14.5px;">MB</span>
<span class="t" style="left:77.20px;top:301.00px;letter-spacing:-0.600px;color:#111;font-weight:bold;font-size:14.5px;">MB</span>
<span class="t" style="left:77.20px;top:321.00px;letter-spacing:-0.600px;color:#111;font-weight:bold;font-size:14.5px;">MB</span>
<span class="t" style="left:439.10px;top:87.00px;letter-spacing:0.414px;color:#333;">Listing</span>
<span class="t" style="left:423.85px;top:111.00px;letter-spacing:-0.013px;color:#333;">200MB - 1GB</span>
<span class="t" style="left:1300.90px;top:111.00px;letter-spacing:0.222px;color:#333;">11  Results</span>
<span class="t" style="left:438.10px;top:130.00px;letter-spacing:0.459px;color:#333;">Table</span>
<span class="t" style="left:496.70px;top:130.00px;letter-spacing:0.246px;color:#333;">Thumbnail</span>
<span class="t" style="left:585.10px;top:129.00px;letter-spacing:0.565px;color:#8aa0ba;">Summary</span>
<span class="t" style="left:435.90px;top:157.00px;letter-spacing:0.168px;color:#333;">Page:</span>
<span class="t" style="left:478.10px;top:157.00px;letter-spacing:0.826px;color:#333;">1 of 1</span>
<span class="t" style="left:553.50px;top:157.00px;letter-spacing:0.424px;color:#333;">Pages:</span>
<span class="t" style="left:681.60px;top:157.00px;letter-spacing:0.210px;color:#333;">Go to Page:</span>
<span class="t" style="left:1231.30px;top:157.00px;letter-spacing:0.300px;color:#333;">Save Table as CSV</span>
<span class="t" style="left:546.60px;top:184.00px;letter-spacing:0.666px;color:#333;">Name</span>
<span class="t" style="left:719.85px;top:184.00px;letter-spacing:0.000px;color:#333;">S</span>
<span class="t" style="left:753.60px;top:184.00px;letter-spacing:0.000px;color:#333;">C</span>
<span class="t" style="left:787.35px;top:184.00px;letter-spacing:0.000px;color:#333;">O</span>
<span class="t" style="left:855.60px;top:184.00px;letter-spacing:0.419px;color:#333;">Modified Time</span>
<span class="t" style="left:1043.80px;top:184.00px;letter-spacing:0.327px;color:#333;">Change Time</span>
<span class="t" style="left:1229.90px;top:184.00px;letter-spacing:0.425px;color:#333;">Access Time</span>
<span class="t" style="left:467.60px;top:205.00px;letter-spacing:0.390px;color:#333;">pycharm-community-2020.2.3.exe</span>
<span class="t" style="left:811.10px;top:205.00px;letter-spacing:0.225px;color:#999999;">2020-10-09 09:39:14 GMT</span>
<span class="t" style="left:996.10px;top:205.00px;letter-spacing:0.225px;color:#999999;">2020-10-09 09:40:35 GMT</span>
<span class="t" style="left:1181.30px;top:205.00px;letter-spacing:0.225px;color:#999999;">2021-08-03 02:26:55 GMT</span>
<span class="t" style="left:1366.10px;top:205.00px;letter-spacing:0.000px;color:#999999;clip-path:inset(0 3px 0 0);">2</span>
<span class="t" style="left:467.60px;top:229.00px;letter-spacing:0.396px;color:#333;">content.bin</span>
<span class="t" style="left:811.10px;top:229.00px;letter-spacing:0.225px;color:#999999;">2021-07-29 06:04:18 GMT</span>
<span class="t" style="left:996.10px;top:229.00px;letter-spacing:0.225px;color:#999999;">2021-07-29 06:04:18 GMT</span>
<span class="t" style="left:1181.30px;top:229.00px;letter-spacing:0.225px;color:#999999;">2021-07-29 06:04:18 GMT</span>
<span class="t" style="left:1366.10px;top:229.00px;letter-spacing:0.000px;color:#999999;clip-path:inset(0 3px 0 0);">2</span>
<span class="t" style="left:467.60px;top:254.00px;letter-spacing:-0.328px;color:#333;">$UsnJrnl:$J</span>
<span class="t" style="left:811.10px;top:254.00px;letter-spacing:0.225px;color:#999999;">2020-10-09 07:36:41 GMT</span>
<span class="t" style="left:996.10px;top:254.00px;letter-spacing:0.225px;color:#999999;">2020-10-09 07:36:41 GMT</span>
<span class="t" style="left:1181.30px;top:254.00px;letter-spacing:0.225px;color:#999999;">2020-10-09 07:36:41 GMT</span>
<span class="t" style="left:1366.10px;top:254.00px;letter-spacing:0.000px;color:#999999;clip-path:inset(0 3px 0 0);">2</span>
<span class="t" style="left:467.60px;top:279.00px;letter-spacing:-0.600px;color:#333;">$MFT</span>
<span class="t" style="left:811.10px;top:279.00px;letter-spacing:0.225px;color:#999999;">2020-10-09 08:33:21 GMT</span>
<span class="t" style="left:996.10px;top:279.00px;letter-spacing:0.225px;color:#999999;">2020-10-09 08:33:21 GMT</span>
<span class="t" style="left:1181.30px;top:279.00px;letter-spacing:0.225px;color:#999999;">2020-10-09 08:33:21 GMT</span>
<span class="t" style="left:1366.10px;top:279.00px;letter-spacing:0.000px;color:#999999;clip-path:inset(0 3px 0 0);">2</span>
<span class="t" style="left:467.60px;top:303.00px;letter-spacing:0.309px;color:#333;">chrome.7z</span>
<span class="t" style="left:811.10px;top:303.00px;letter-spacing:0.270px;color:#999999;">2021-07-27 11:53:00 GMT</span>
<span class="t" style="left:996.10px;top:303.00px;letter-spacing:0.270px;color:#999999;">2021-07-27 11:55:46 GMT</span>
<span class="t" style="left:1181.30px;top:303.00px;letter-spacing:0.225px;color:#999999;">2021-08-03 08:42:43 GMT</span>
<span class="t" style="left:1366.10px;top:303.00px;letter-spacing:0.000px;color:#999999;clip-path:inset(0 3px 0 0);">2</span>
<span class="t" style="left:467.60px;top:328.00px;letter-spacing:0.434px;color:#333;">swapfile.sys</span>
<span class="t" style="left:811.10px;top:328.00px;letter-spacing:0.225px;color:#999999;">2021-08-02 18:38:04 GMT</span>
<span class="t" style="left:996.10px;top:328.00px;letter-spacing:0.225px;color:#999999;">2021-08-02 18:38:04 GMT</span>
<span class="t" style="left:1181.30px;top:328.00px;letter-spacing:0.225px;color:#999999;">2021-08-02 18:38:04 GMT</span>
<span class="t" style="left:1366.10px;top:328.00px;letter-spacing:0.000px;color:#999999;clip-path:inset(0 3px 0 0);">2</span>
<span class="t" style="left:467.60px;top:353.00px;letter-spacing:0.396px;color:#333;">content.bin</span>
<span class="t" style="left:811.10px;top:353.00px;letter-spacing:0.225px;color:#999999;">2021-08-02 12:05:05 GMT</span>
<span class="t" style="left:996.10px;top:353.00px;letter-spacing:0.225px;color:#999999;">2021-08-02 12:05:05 GMT</span>
<span class="t" style="left:1181.30px;top:353.00px;letter-spacing:0.225px;color:#999999;">2021-08-02 12:05:05 GMT</span>
<span class="t" style="left:1366.10px;top:353.00px;letter-spacing:0.000px;color:#999999;clip-path:inset(0 3px 0 0);">2</span>
<span class="t" style="left:466.60px;top:378.00px;letter-spacing:0.197px;color:#333;">Windows10.0-KB5004237-x64.cab</span>
<span class="t" style="left:811.10px;top:378.00px;letter-spacing:0.225px;color:#999999;">2021-08-02 12:05:05 GMT</span>
<span class="t" style="left:996.10px;top:378.00px;letter-spacing:0.225px;color:#999999;">2021-08-02 12:05:05 GMT</span>
<span class="t" style="left:1181.30px;top:378.00px;letter-spacing:0.225px;color:#999999;">2021-08-02 12:05:05 GMT</span>
<span class="t" style="left:1366.10px;top:378.00px;letter-spacing:0.000px;color:#999999;clip-path:inset(0 3px 0 0);">2</span>
<span class="t" style="left:467.60px;top:402.00px;letter-spacing:0.405px;color:#333;">pagefile.sys</span>
<span class="t" style="left:811.10px;top:402.00px;letter-spacing:0.225px;color:#999999;">2021-08-02 18:38:04 GMT</span>
<span class="t" style="left:996.10px;top:402.00px;letter-spacing:0.225px;color:#999999;">2021-08-02 18:38:04 GMT</span>
<span class="t" style="left:1181.30px;top:402.00px;letter-spacing:0.225px;color:#999999;">2021-08-02 18:38:04 GMT</span>
<span class="t" style="left:1366.10px;top:402.00px;letter-spacing:0.000px;color:#999999;clip-path:inset(0 3px 0 0);">2</span>
<span class="t" style="left:467.60px;top:427.00px;letter-spacing:0.241px;color:#333;">$BadClus:$Bad</span>
<span class="t" style="left:811.10px;top:427.00px;letter-spacing:0.225px;color:#999999;">2020-10-09 07:38:29 GMT</span>
<span class="t" style="left:996.10px;top:427.00px;letter-spacing:0.225px;color:#999999;">2020-10-09 07:38:29 GMT</span>
<span class="t" style="left:1181.30px;top:427.00px;letter-spacing:0.225px;color:#999999;">2020-10-09 07:38:29 GMT</span>
<span class="t" style="left:1366.10px;top:427.00px;letter-spacing:0.000px;color:#999999;clip-path:inset(0 3px 0 0);">2</span>
<span class="t" style="left:466.60px;top:452.00px;letter-spacing:0.218px;color:#333;">Winre.wim</span>
<span class="t" style="left:811.10px;top:452.00px;letter-spacing:0.270px;color:#999999;">2020-05-11 05:32:27 GMT</span>
<span class="t" style="left:996.10px;top:452.00px;letter-spacing:0.225px;color:#999999;">2020-10-09 07:38:32 GMT</span>
<span class="t" style="left:1181.30px;top:452.00px;letter-spacing:0.225px;color:#999999;">2021-06-03 21:57:10 GMT</span>
<span class="t" style="left:1366.10px;top:452.00px;letter-spacing:0.000px;color:#999999;clip-path:inset(0 3px 0 0);">2</span>
<span class="t" style="left:428.10px;top:689.00px;letter-spacing:0.346px;color:#333;">Data Content</span>
<span class="t" style="left:437.10px;top:711.00px;letter-spacing:0.052px;color:#8a9bb0;">OS Account</span>
<span class="t" style="left:532.40px;top:711.00px;letter-spacing:0.386px;color:#8a9bb0;">Data Artifacts</span>
<span class="t" style="left:643.10px;top:711.00px;letter-spacing:0.281px;color:#8a9bb0;">Analysis Results</span>
<span class="t" style="left:771.30px;top:711.00px;letter-spacing:0.221px;color:#8a9bb0;">Context</span>
<span class="t" style="left:842.90px;top:711.00px;letter-spacing:0.265px;color:#8a9bb0;">Annotations</span>
<span class="t" style="left:940.90px;top:711.00px;letter-spacing:0.338px;color:#8a9bb0;">Other Occurrences</span>
<span class="t" style="left:486.35px;top:730.00px;letter-spacing:-0.054px;color:#8a9bb0;">Hex</span>
<span class="t" style="left:640.80px;top:730.00px;letter-spacing:0.331px;color:#8a9bb0;">Text</span>
<span class="t" style="left:844.10px;top:730.00px;letter-spacing:0.206px;color:#8a9bb0;">Application</span>
<span class="t" style="left:1150.10px;top:730.00px;letter-spacing:0.226px;color:#8a9bb0;">File Metadata</span>
<span class="t" style="left:1362.10px;top:951.00px;letter-spacing:0.000px;color:#444;">3</span>
</div>
</body></html>
